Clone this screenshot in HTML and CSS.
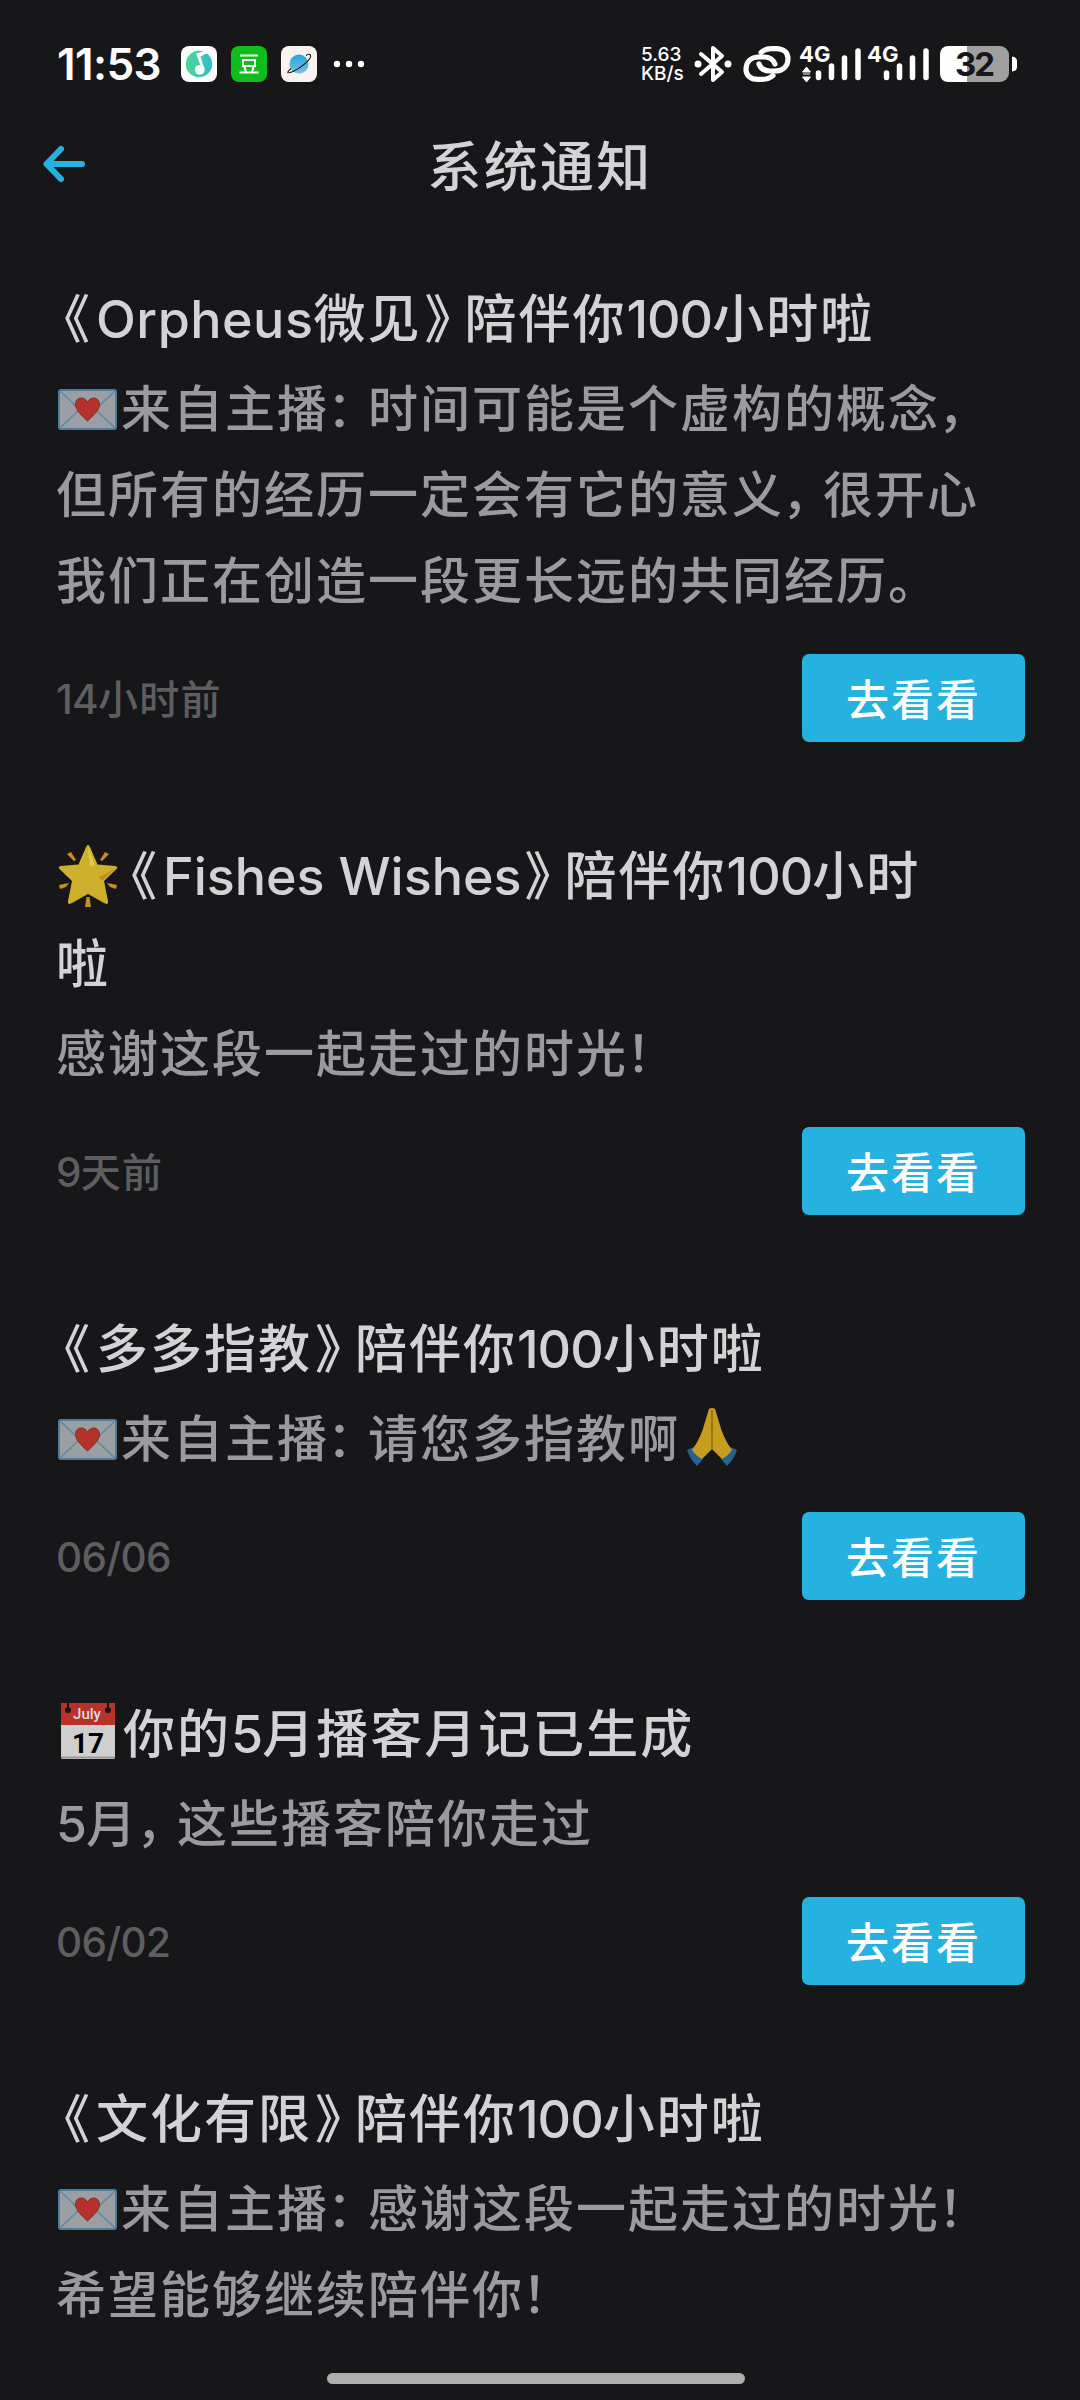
FILE: index.html
```html
<!DOCTYPE html>
<html lang="zh-CN">
<head>
<meta charset="utf-8">
<title>系统通知</title>
<link rel="stylesheet" href="styles.css">
</head>
<body>
<svg class="defs" width="0" height="0" aria-hidden="true">
  <symbol id="letter" viewBox="0 0 60 44">
    <rect x="1" y="2" width="57" height="39" rx="2" fill="#9b9fa3" stroke="#4c7f9c" stroke-width="2"/>
    <path d="M2 3L23 23M57 3L36 23M2 40L21 22M57 40L38 22" stroke="#5a8ba6" stroke-width="1.6" fill="none"/>
    <path d="M29.500 33C23 27 17.500 22 17.500 16.500C17.500 8.500 26.500 8 29.500 14C32.500 8 41.500 8.500 41.500 16.500C41.500 22 36 27 29.500 33Z" fill="#b5322b" stroke="#742820" stroke-width=".8"/>
  </symbol>
  <symbol id="star" viewBox="0 0 60 64">
    <path d="M30 1Q31 1 32 3L39.500 20.500L57 22Q61 22.500 58 25.500L46 37L50 57Q50.500 61 47 59.500L30 50L13 59.500Q9.500 61 10 57L14 37L2 25.500Q-1 22.500 3 22L20.500 20.500L28 3Q29 1 30 1Z" fill="#cfb02d"/>
    <path d="M30 3L37 21L32 22Z" fill="#d9cc50"/><path d="M41 33L57 25L45 36L42 35Z" fill="#c29022"/>
    <path d="M9 10L13 8L18 16L16 17ZM51 10L47 8L42 16L44 17ZM1 41L11 39L8 43L2 45ZM59 41L49 39L52 43L58 45ZM28.500 53H31.500L33 63H27Z" fill="#c98f1e"/>
  </symbol>
  <symbol id="pray" viewBox="0 0 52 60">
    <path d="M1 43L8 40L17 52L11 59Q4 52 1 43ZM51 43L44 40L35 52L41 59Q48 52 51 43Z" fill="#226391"/>
    <path d="M23 2Q26 0 29 2L33 15Q37 31 46 43Q42 49 36 52L26 42L16 52Q10 49 6 43Q15 31 19 15Z" fill="#c79d20"/>
    <path d="M26 3V42" stroke="#916813" stroke-width="1.500"/>
  </symbol>
  <symbol id="calendar" viewBox="0 0 54 58">
    <rect y="1" width="54" height="56" rx="2" fill="#cfcfcf"/>
    <path d="M0 3Q0 1 2 1H52Q54 1 54 3V23H0Z" fill="#b8322b"/>
    <path d="M0 55.500H54" stroke="#999" stroke-width="2"/>
    <path d="M7 0V6M47 0V6" stroke="#171719" stroke-width="2"/>
    <circle cx="7" cy="8" r="3" fill="#171719"/><circle cx="47" cy="8" r="3" fill="#171719"/>
    <text class="cal-month" x="26" y="17" text-anchor="middle">July</text>
    <text class="cal-day" x="27" y="50.500" text-anchor="middle">17</text>
  </symbol>
</svg>

<div class="screen">
  <div class="status">
    <div class="status-left">
      <span class="clock">11:53</span>
      <svg class="app" viewBox="0 0 36 36"><defs><linearGradient id="g1"><stop stop-color="#4bd894"/><stop offset="1" stop-color="#36b9cf"/></linearGradient><linearGradient id="g2" x2="0" y2="1"><stop stop-color="#1ea9dc"/><stop offset="1" stop-color="#7fbde0"/></linearGradient></defs><rect width="36" height="36" rx="8" fill="#fafdfd"/><circle cx="18" cy="18" r="13.200" fill="url(#g1)"/><path d="M15 7.500L24 5L26.500 7L19.500 10.500L23.500 23.500L20 21Z" fill="#fafdfd"/><circle cx="18.700" cy="23.800" r="4.900" fill="#fafdfd"/></svg>
      <svg class="app" viewBox="0 0 36 36"><rect width="36" height="36" rx="8" fill="#0fbd1c"/><path d="M9 9.500H27M12 14H24V20H12ZM13.500 21L15 26M22.500 21L21 26M8.500 26.500H27.500" fill="none" stroke="#fff" stroke-width="2"/></svg>
      <svg class="app" viewBox="0 0 36 36"><rect width="36" height="36" rx="8" fill="#fbf2ef"/><circle cx="18" cy="18" r="9.500" fill="url(#g2)"/><path d="M10 22.500C5 27 6 28 12 25.500C20 22 31 13 29.500 9C29 7.500 27 8.500 25 9.500" fill="none" stroke="#111" stroke-width="1.100"/></svg>
      <svg class="dots" viewBox="0 0 32 8"><circle cx="4" cy="4" r="3.200"/><circle cx="16" cy="4" r="3.200"/><circle cx="28" cy="4" r="3.200"/></svg>
    </div>
    <div class="status-right">
      <div class="speed"><span>5.63</span><span>KB/s</span></div>
      <svg class="bt" viewBox="0 0 38 38"><path d="M7 9L28 27L19 35V3L28 11L7 29" fill="none" stroke="#fff" stroke-width="4" stroke-linejoin="round" stroke-linecap="round"/><circle cx="4" cy="19" r="3.500" fill="#fff"/><circle cx="34" cy="19" r="3.500" fill="#fff"/></svg>
      <svg class="link" viewBox="0 0 48 36"><g fill="none" stroke="#fff" stroke-width="5.200" stroke-linecap="round"><path d="M18 6.500C21 3.500 24 2.600 29 2.600H33C41 2.600 45 7 45 12.500C45 20 40 25 32 25H27C21 25 17.500 22 16 18"/><path d="M30 29.500C27 32.500 24 33.400 19 33.400H15C7 33.400 3 29 3 23.500C3 16 8 11 16 11H21C27 11 30.500 14 32 18"/></g></svg>
      <svg class="signal" viewBox="0 0 64 38"><text class="net" x="0" y="17">4G</text><path d="M7.500 22L11.500 27H3.500ZM7.500 37L11.500 32H3.500ZM4 29H11" fill="#fff" stroke="#fff"/><path d="M19.500 28V32.500M32.500 21V32.500M45.500 13V32.500M59 6V32.500" stroke="#fff" stroke-width="5.500" stroke-linecap="round"/></svg>
      <svg class="signal" viewBox="0 0 64 38"><text class="net" x="0" y="17">4G</text><path d="M19.500 28V32.500M32.500 21V32.500M45.500 13V32.500M59 6V32.500" stroke="#fff" stroke-width="5.500" stroke-linecap="round"/></svg>
      <svg class="battery" viewBox="0 0 77 36"><rect width="69" height="36" rx="9" fill="#a0a0a0"/><path d="M9 0H27V36H9Q0 36 0 27V9Q0 0 9 0Z" fill="#fff"/><path d="M72 10.500Q77 11 77 15V21Q77 25 72 25.500Z" fill="#fff"/><text class="level" x="34" y="30" text-anchor="middle">32</text></svg>
    </div>
  </div>

  <header class="bar">
    <svg class="back" viewBox="0 0 42 38"><path d="M18 4L3.500 19L18 34M4 19H39" fill="none" stroke="#26b2e1" stroke-width="6" stroke-linecap="round" stroke-linejoin="round"/></svg>
    <h1 class="heading">系统通知</h1>
  </header>

  <main class="list">
    <article class="item">
      <h2 class="title"><span class="open">《</span><span class="latin">Orpheus</span>微见<span class="close">》</span>陪伴你<span class="num">100</span>小时啦</h2>
      <p class="body"><svg class="mail"><use href="#letter"/></svg>来自主播<span class="colon">：</span>时间可能是个虚构的概念<span class="comma">，</span><br>但所有的经历一定会有它的意义<span class="comma">，</span>很开心<br>我们正在创造一段更长远的共同经历。</p>
      <div class="foot"><time class="time"><span class="tnum">14</span>小时前</time><button class="go">去看看</button></div>
    </article>
    <article class="item">
      <h2 class="title"><svg class="glow"><use href="#star"/></svg><span class="open">《</span><span class="latin tight">Fishes Wishes</span><span class="close">》</span>陪伴你<span class="num">100</span>小时<br>啦</h2>
      <p class="body">感谢这段一起走过的时光<span class="bang">！</span></p>
      <div class="foot"><time class="time"><span class="tnum">9</span>天前</time><button class="go">去看看</button></div>
    </article>
    <article class="item">
      <h2 class="title"><span class="open">《</span>多多指教<span class="close">》</span>陪伴你<span class="num">100</span>小时啦</h2>
      <p class="body"><svg class="mail"><use href="#letter"/></svg>来自主播<span class="colon">：</span>请您多指教啊<svg class="hands"><use href="#pray"/></svg></p>
      <div class="foot"><time class="time"><span class="tnum">06/06</span></time><button class="go">去看看</button></div>
    </article>
    <article class="item">
      <h2 class="title"><svg class="cal"><use href="#calendar"/></svg>你的<span class="num">5</span>月播客月记已生成</h2>
      <p class="body"><span class="bnum">5</span>月<span class="comma">，</span>这些播客陪你走过</p>
      <div class="foot"><time class="time"><span class="tnum">06/02</span></time><button class="go">去看看</button></div>
    </article>
    <article class="item">
      <h2 class="title"><span class="open">《</span>文化有限<span class="close">》</span>陪伴你<span class="num">100</span>小时啦</h2>
      <p class="body"><svg class="mail"><use href="#letter"/></svg>来自主播<span class="colon">：</span>感谢这段一起走过的时光<span class="bang">！</span><br>希望能够继续陪伴你<span class="bang">！</span></p>
    </article>
  </main>
  <div class="home"></div>
</div>
</body>
</html>
```
FILE: styles.css
```css
* { box-sizing: border-box; }
body { margin: 0; background: #171719; }
.defs { position: absolute; }
.screen {
  position: relative;
  width: 1080px;
  height: 2400px;
  overflow: hidden;
  background: #171719;
  color: #d3d3d5;
  font-family: "Noto Sans CJK SC", sans-serif;
  font-weight: 500;
}
svg { display: block; flex: none; overflow: visible; }

.status {
  display: flex;
  justify-content: space-between;
  height: 128px;
  padding: 0 63px 0 57px;
  color: #fff;
}
.status-left, .status-right { display: flex; align-items: center; height: 128px; }
.clock { width: 124px; font: 600 44px/60px Inter, sans-serif; letter-spacing: -0.6px; white-space: nowrap; }
.app { width: 36px; height: 36px; margin-right: 14px; }
.dots { width: 32px; height: 8px; margin-left: 2px; fill: #fff; }
.speed { display: flex; flex-direction: column; width: 53px; font: 500 19px/19px Inter, sans-serif; }
.bt { width: 38px; height: 38px; margin-right: 11px; }
.link { width: 48px; height: 36px; margin-right: 8px; }
.signal { width: 64px; height: 38px; margin-right: 4px; }
.signal + .battery { margin-left: 5px; }
.battery { width: 77px; height: 36px; }
.net { font: 700 22px Inter, sans-serif; fill: #fff; }
.level { font: 700 33px Inter, sans-serif; letter-spacing: -2px; fill: #171719; }

.bar {
  display: grid;
  grid-template-columns: 42px 1fr 42px;
  align-items: center;
  height: 76px;
  padding: 0 43px;
}
.back { width: 42px; height: 38px; margin-top: -4px; }
.heading { margin: -4px 0 0; text-align: center; font-size: 54px; line-height: 76px; font-weight: 500; letter-spacing: 2.2px; }

.list { padding: 68px 55px 0 56px; }
.item { margin-bottom: 87px; }
.title, .body { margin: 0; white-space: nowrap; font-weight: 500; }
.title { font-size: 52px; line-height: 88px; letter-spacing: 2px; margin-bottom: 2px; }
.body { font-size: 50px; line-height: 86px; letter-spacing: 2px; color: #9b9b9f; }
.title svg, .body svg { display: inline-block; }
.open, .close, .colon, .comma, .bang { display: inline-block; line-height: 1; font-feature-settings: "halt"; }
.open { width: 40px; text-indent: 8px; }
.close { width: 43px; text-indent: 3px; }
.colon, .comma, .bang { width: 39px; text-indent: -2px; }
.latin, .num, .bnum, .tnum { font-family: Inter, sans-serif; line-height: 1; }
.latin { letter-spacing: 0.5px; }
.latin.tight { letter-spacing: 0; }
.num, .bnum { letter-spacing: -1px; }
.tnum { font-size: 40.5px; letter-spacing: -0.7px; }
.mail { width: 60px; height: 44px; margin: 0 3px 0 2px; vertical-align: -5px; }
.glow { width: 60px; height: 64px; margin: 0 5px 0 2px; vertical-align: -13px; }
.hands { width: 52px; height: 60px; margin-left: 6px; vertical-align: -10px; }
.cal { width: 54px; height: 58px; margin: 0 8px 0 5px; vertical-align: -7px; }
.cal-month { font: 500 15px Roboto, sans-serif; letter-spacing: 0; fill: #ddd; }
.cal-day { font: 700 28px Roboto, sans-serif; letter-spacing: 0; fill: #000; }

.foot { display: flex; justify-content: space-between; align-items: center; height: 88px; margin-top: 34px; }
.time { margin-top: -2px; font-size: 40px; line-height: 60px; letter-spacing: 1.2px; color: #5e5e61; }
.go {
  width: 223px;
  height: 88px;
  padding: 0 0 2px;
  border: 0;
  border-radius: 7px;
  background: #26b2e1;
  color: #fff;
  font: 500 43px/86px "Noto Sans CJK SC", sans-serif;
  letter-spacing: 2px;
}
.home {
  position: absolute;
  left: 327px;
  top: 2373px;
  width: 418px;
  height: 11px;
  border-radius: 6px;
  background: #adadad;
}
```
